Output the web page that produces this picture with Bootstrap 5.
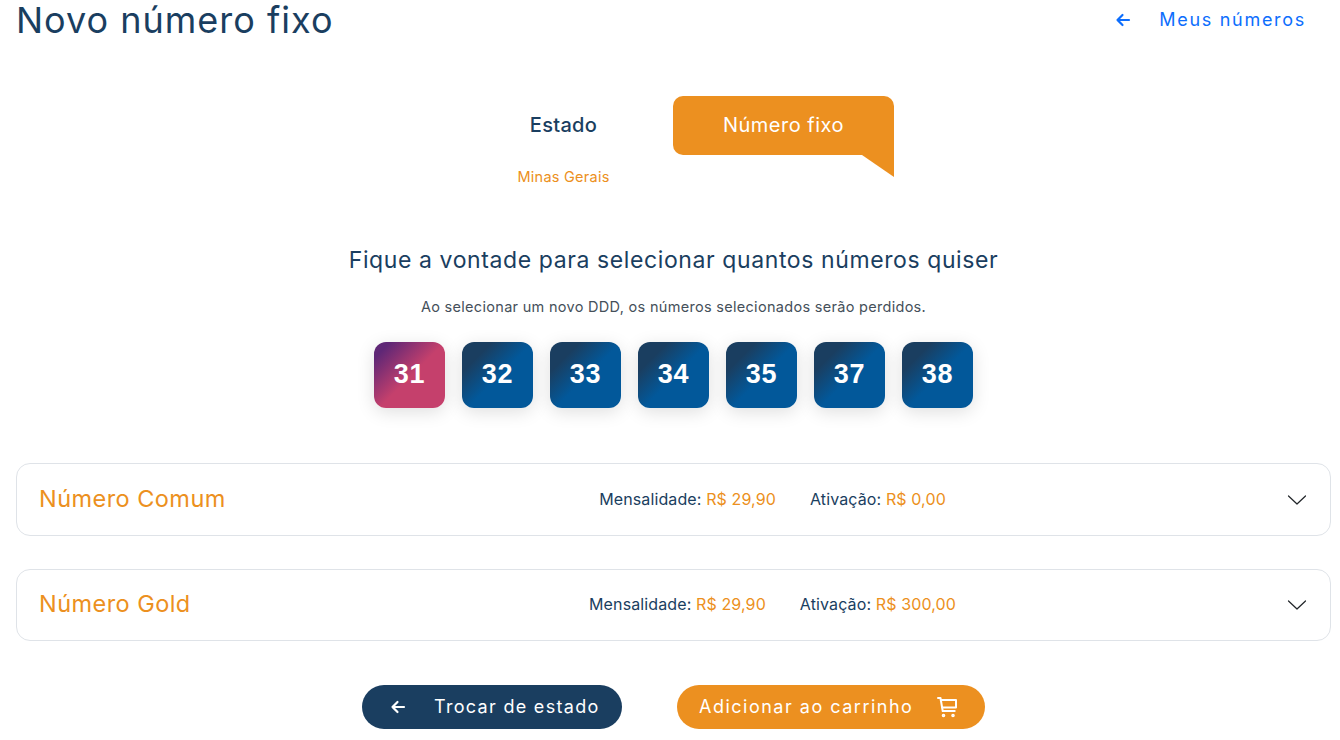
<!DOCTYPE html>
<html lang="pt-BR">
<head>
<meta charset="utf-8">
<title>Novo número fixo</title>
<link href="https://cdn.jsdelivr.net/npm/bootstrap@5.3.0/dist/css/bootstrap.min.css" rel="stylesheet">
<style>
html,body{height:740px;overflow:hidden;background:#fff}
body{font-family:Inter,"Liberation Sans",sans-serif;color:#1a3e60}
.page-wrap{padding:0 9px 0 16px}
.top-bar{height:40px}
.page-title{font-size:36px;font-weight:400;line-height:40px;color:#1a3e60;margin:0;letter-spacing:1px}
.back-link{color:#0d6efd;font-size:18px;letter-spacing:1.7px;text-decoration:none;margin-right:25px;gap:28px}
.back-link span{padding-bottom:2px}
.steps{margin-top:56px;height:81px;gap:38.5px;padding-left:39.5px}
.step-plain{width:142px}
.step-name{height:59px;font-size:20px;font-weight:500;letter-spacing:.3px;color:#1a3e60;padding-bottom:1px}
.step-sub{font-size:14.5px;letter-spacing:.25px;color:#ec9020;margin-top:13px;line-height:18px}
.step-active{position:relative;width:221px;height:59px;background:#ec9020;color:#fff;border-radius:10px 10px 0 10px;font-size:20px;letter-spacing:.5px;padding-bottom:1px}
.step-active::after{content:"";position:absolute;right:0;top:59px;border-style:solid;border-width:0 32px 22px 0;border-color:transparent #ec9020 transparent transparent}
.lead-text{padding-top:67px;font-size:23px;letter-spacing:.6px;line-height:32px;text-align:center;color:#1a3e60}
.hint-text{font-size:14.5px;letter-spacing:.3px;text-align:center;color:#45505a;margin-top:20px;line-height:21px}
.ddd-row{gap:17px;margin-top:25px}
.ddd-btn{width:71px;height:66px;border:0;border-radius:12px;color:#fff;font-family:"Liberation Sans",Arial,sans-serif;font-weight:700;font-size:27px;letter-spacing:.8px;padding:0 0 2px;background:linear-gradient(135deg,#1a3e60 22%,#02589a 52%);box-shadow:0 4px 18px rgba(0,0,0,.13)}
.ddd-btn.picked{background:linear-gradient(135deg,#5f2776 12%,#c5406c 52%)}
.plan-gap{height:55px}
.plan-box{height:73px;border:1px solid #dfe3e8;border-radius:14px;padding:0 22px 0 22px;position:relative}
.plan-box + .plan-box{margin-top:33px;height:72px}
.plan-name{font-size:23.5px;letter-spacing:.45px;color:#ec9020;width:300px;padding-bottom:2px}
.plan-prices{position:absolute;left:0;right:0;top:0;bottom:0;font-size:16px;letter-spacing:.12px;color:#1a3e60;gap:34px;padding:0 0 2px 198px}
.plan-prices b{font-weight:400;color:#ec9020}
.plan-chev{position:relative}
.actions{margin-top:44px;gap:55px}
.pill{height:44px;border:0;border-radius:22px;color:#fff;font-size:18px}
.pill span{padding-bottom:2px}
.pill-dark{background:#1a3e60;width:260px;padding:0 0 0 28px;gap:28px;letter-spacing:1.3px}
.pill-orange{background:#ec9020;width:308px;padding:0 0 0 22px;gap:22px;letter-spacing:1.5px}
</style>
</head>
<body>
<div class="page-wrap">
  <div class="top-bar d-flex justify-content-between align-items-center">
    <h1 class="page-title">Novo número fixo</h1>
    <a href="#" class="back-link d-flex align-items-center">
      <svg width="16" height="16" viewBox="0 0 16 16" fill="none" stroke="#0d6efd" stroke-width="2.2" stroke-linecap="round" stroke-linejoin="round"><path d="M14 8H2.5M7.5 3 2.5 8l5 5"/></svg>
      <span>Meus números</span>
    </a>
  </div>

  <div class="steps d-flex justify-content-center">
    <div class="step-plain text-center">
      <div class="step-name d-flex align-items-center justify-content-center">Estado</div>
      <div class="step-sub">Minas Gerais</div>
    </div>
    <div class="step-active d-flex align-items-center justify-content-center">Número fixo</div>
  </div>

  <div class="lead-text">Fique a vontade para selecionar quantos números quiser</div>
  <div class="hint-text">Ao selecionar um novo DDD, os números selecionados serão perdidos.</div>

  <div class="ddd-row d-flex justify-content-center">
    <button class="ddd-btn picked">31</button>
    <button class="ddd-btn">32</button>
    <button class="ddd-btn">33</button>
    <button class="ddd-btn">34</button>
    <button class="ddd-btn">35</button>
    <button class="ddd-btn">37</button>
    <button class="ddd-btn">38</button>
  </div>

  <div class="plan-gap"></div>

  <div class="plan-box d-flex align-items-center justify-content-between">
    <div class="plan-name">Número Comum</div>
    <div class="plan-prices d-flex align-items-center justify-content-center">
      <span>Mensalidade: <b>R$ 29,90</b></span>
      <span>Ativação: <b>R$ 0,00</b></span>
    </div>
    <svg class="plan-chev" width="22" height="22" viewBox="0 0 22 22" fill="none" stroke="#212529" stroke-width="1.2" stroke-linecap="round" stroke-linejoin="round"><path d="M2.5 7 11 15l8.500-8"/></svg>
  </div>
  <div class="plan-box d-flex align-items-center justify-content-between">
    <div class="plan-name">Número Gold</div>
    <div class="plan-prices d-flex align-items-center justify-content-center">
      <span>Mensalidade: <b>R$ 29,90</b></span>
      <span>Ativação: <b>R$ 300,00</b></span>
    </div>
    <svg class="plan-chev" width="22" height="22" viewBox="0 0 22 22" fill="none" stroke="#212529" stroke-width="1.2" stroke-linecap="round" stroke-linejoin="round"><path d="M2.5 7 11 15l8.500-8"/></svg>
  </div>

  <div class="actions d-flex justify-content-center">
    <button class="pill pill-dark d-flex align-items-center">
      <svg width="16" height="16" viewBox="0 0 16 16" fill="none" stroke="#fff" stroke-width="2.2" stroke-linecap="round" stroke-linejoin="round"><path d="M14 8H2.5M7.5 3 2.5 8l5 5"/></svg>
      <span>Trocar de estado</span>
    </button>
    <button class="pill pill-orange d-flex align-items-center">
      <span>Adicionar ao carrinho</span>
      <svg width="24" height="24" viewBox="0 0 24 24" fill="none" stroke="#fff" stroke-width="2" stroke-linecap="round" stroke-linejoin="round"><path d="M3 3h2.500l2.200 13h12"/><path d="M5.800 5H21v7.500H7.300"/><circle cx="8.500" cy="20.500" r=".8"/><circle cx="18" cy="20.500" r=".8"/></svg>
    </button>
  </div>
</div>
<script src="https://cdn.jsdelivr.net/npm/bootstrap@5.3.0/dist/js/bootstrap.bundle.min.js"></script>
</body>
</html>
